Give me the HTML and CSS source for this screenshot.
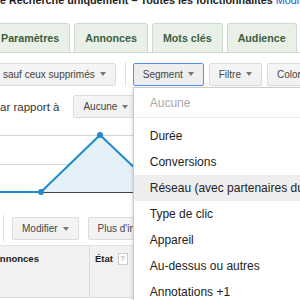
FILE: index.html
```html
<!DOCTYPE html>
<html lang="fr">
<head>
  <meta charset="UTF-8">
  <meta name="viewport" content="width=device-width, initial-scale=1.0">
  <title>Annonces</title>
  <link rel="stylesheet" href="styles.css">
</head>
<body>
  <div class="page">
    <div class="title">e Recherche uniquement – Toutes les fonctionnalités <a class="link" href="#">Modifier</a></div>

    <div class="tabs">
      <div class="tab">Paramètres</div>
      <div class="tab">Annonces</div>
      <div class="tab">Mots clés</div>
      <div class="tab">Audience</div>
      <div class="tab">Dimensions</div>
    </div>

    <div class="toolbar">
      <div class="btn btn-first">sauf ceux supprimés <span class="caret"></span></div>
      <div class="sep"></div>
      <div class="dropdown">
        <div class="btn active">Segment <span class="caret"></span></div>
        <ul class="menu">
          <li class="menu-item disabled">Aucune</li>
          <li class="menu-divider"></li>
          <li class="menu-item">Durée</li>
          <li class="menu-item">Conversions</li>
          <li class="menu-item hover">Réseau (avec partenaires du Réseau de Recherche)</li>
          <li class="menu-item">Type de clic</li>
          <li class="menu-item">Appareil</li>
          <li class="menu-item">Au-dessus ou autres</li>
          <li class="menu-item">Annotations +1</li>
        </ul>
      </div>
      <div class="btn">Filtre <span class="caret"></span></div>
      <div class="btn">Colonnes <span class="caret"></span></div>
    </div>

    <div class="compare">
      <span class="label">ar rapport à</span>
      <div class="btn">Aucune <span class="caret"></span></div>
    </div>

    <div class="chart">
      <svg width="300" height="83" viewBox="0 0 300 83">
        <line x1="0" y1="17.5" x2="300" y2="17.5" stroke="#d4d4d4" stroke-width="1"/>
        <line x1="0" y1="46.5" x2="300" y2="46.5" stroke="#d4d4d4" stroke-width="1"/>
        <polygon points="41,74 100,17 160,74" fill="#e4f1f9"/>
        <line x1="0" y1="74.5" x2="300" y2="74.5" stroke="#444" stroke-width="1"/>
        <polyline points="0,74 41,74 100,17 160,74 300,74" fill="none" stroke="#1f8ccc" stroke-width="2"/>
        <circle cx="41" cy="74" r="3" fill="#1f8ccc"/>
        <circle cx="100" cy="17" r="3" fill="#1f8ccc"/>
      </svg>
    </div>

    <div class="toolbar toolbar-table">
      <div class="sep sep-tall"></div>
      <div class="btn">Modifier <span class="caret"></span></div>
      <div class="btn">Plus d'infos <span class="caret"></span></div>
    </div>

    <div class="grid-head">
      <div class="cell cell-name">Annonces</div>
      <div class="cell cell-state">État <span class="help">?</span></div>
      <div class="cell"></div>
    </div>
  </div>
</body>
</html>
```

FILE: styles.css
```css
body {
  margin: 0;
  padding: 0;
  font-family: "Liberation Sans", Arial, sans-serif;
  color: #333;
  background: #fff;
  overflow: hidden;
}

.page {
  width: 300px;
  height: 300px;
  padding-top: 1px;
  overflow: hidden;
}

.title {
  margin-top: -8px;
  line-height: 14px;
  font-size: 10.8px;
  font-weight: bold;
  color: #222;
  white-space: nowrap;
}

.link {
  color: #1155cc;
  font-weight: normal;
  text-decoration: none;
}

.tabs {
  display: flex;
  margin-top: 16px;
  margin-left: -10px;
  border-bottom: 1px solid #c9dcc9;
  height: 29px;
}

.tab {
  flex-shrink: 0;
  box-sizing: border-box;
  height: 29px;
  line-height: 28px;
  padding: 0 10px;
  margin-right: 4px;
  border: 1px solid #c9dcc9;
  border-bottom: none;
  border-radius: 3px 3px 0 0;
  background-color: #e8f0e8;
  color: #3d5e3d;
  font-size: 10.7px;
  font-weight: bold;
  white-space: nowrap;
}

.toolbar {
  display: flex;
  align-items: center;
  margin-top: 9px;
}

.btn {
  flex-shrink: 0;
  display: flex;
  align-items: center;
  box-sizing: border-box;
  height: 23px;
  padding: 0 9px;
  margin-right: 5px;
  border: 1px solid #dcdcdc;
  border-radius: 2px;
  background: linear-gradient(#f5f5f5, #f1f1f1);
  color: #444;
  font-size: 10px;
  white-space: nowrap;
}

.btn.active {
  border-color: #4d90fe;
  background: #eeeeee;
}

.btn-first {
  margin-left: -7px;
  margin-right: 0;
}

.caret {
  display: inline-block;
  width: 0;
  height: 0;
  margin-left: 5px;
  border-left: 3.5px solid transparent;
  border-right: 3.5px solid transparent;
  border-top: 4px solid #777;
}

.sep {
  flex-shrink: 0;
  width: 1px;
  height: 24px;
  margin: 0 7px 0 9px;
  background-color: #e0e0e0;
}

.dropdown {
  position: relative;
  display: flex;
  flex-shrink: 0;
  z-index: 10;
}

.dropdown .btn {
  margin-right: 5px;
}

.menu {
  position: absolute;
  top: 24px;
  left: 0;
  width: 240px;
  margin: 0;
  padding: 2px 0 0;
  list-style: none;
  background: #fff;
  border: 1px solid rgba(0, 0, 0, 0.2);
  box-shadow: 0 2px 4px rgba(0, 0, 0, 0.2);
}

.menu-item {
  height: 26px;
  line-height: 26px;
  padding-left: 16px;
  font-size: 12px;
  color: #222;
  white-space: nowrap;
}

.menu-item.disabled {
  color: #aaa;
}

.menu-item.hover {
  background-color: #eeeeee;
}

.menu-divider {
  height: 1px;
  margin: 1px 0 5px;
  background-color: #ebebeb;
}

.compare {
  display: flex;
  align-items: center;
  margin-top: 9px;
}

.label {
  flex-shrink: 0;
  font-size: 11.5px;
  color: #333;
  margin-right: 14px;
  white-space: nowrap;
}

.chart {
  height: 83px;
}

.chart svg {
  display: block;
}

.toolbar-table {
  margin-top: 14px;
}

.toolbar-table .btn {
  margin-right: 9px;
}

.sep-tall {
  height: 27px;
  margin: 0 8px 0 3px;
}

.grid-head {
  display: flex;
  box-sizing: border-box;
  height: 53px;
  margin-top: 3px;
  border-top: 1px solid #e3e3e3;
  border-bottom: 1px solid #dcdcdc;
  background-color: #f1f1f1;
}

.cell {
  flex-shrink: 0;
  box-sizing: border-box;
  padding: 7px 5px 0;
  line-height: 12px;
  font-size: 9.5px;
  font-weight: bold;
  color: #222;
  white-space: nowrap;
}

.cell-name {
  width: 103px;
  margin-left: -13px;
  padding-left: 6px;
  border-right: 1px solid #dddddd;
}

.cell-state {
  width: 60px;
  border-right: 1px solid #dddddd;
}

.help {
  display: inline-block;
  width: 8px;
  height: 10px;
  margin-left: 2px;
  border: 1px solid #cccccc;
  background: #fff;
  color: #999;
  font-size: 8px;
  font-weight: normal;
  line-height: 10px;
  text-align: center;
  vertical-align: top;
}
```
